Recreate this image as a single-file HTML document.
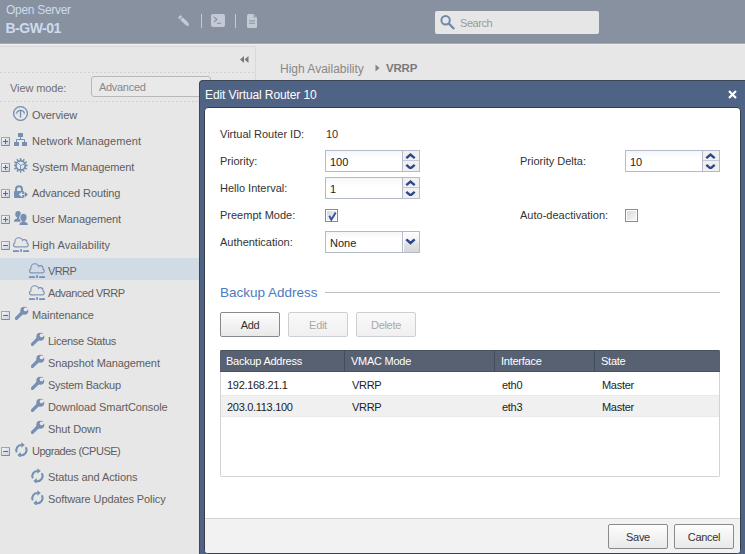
<!DOCTYPE html>
<html><head><meta charset="utf-8">
<style>
*{box-sizing:border-box;margin:0;padding:0}
html,body{width:745px;height:554px;overflow:hidden;background:#e7e7e7;font-family:"Liberation Sans",sans-serif;font-size:11px;color:#333}
.abs{position:absolute}
#hdr{position:absolute;left:0;top:0;width:745px;height:44px;background:#8891a0;border-bottom:1px solid #a9aaa6;box-shadow:0 1px 0 #eeeeee}
#hdr .t1{position:absolute;left:6px;top:3px;font-size:12px;letter-spacing:-0.3px;color:#cddbee;white-space:nowrap}
#hdr .t2{position:absolute;left:5.5px;top:20px;font-size:14px;letter-spacing:-0.5px;font-weight:bold;color:#cddbee;white-space:nowrap}
.sep{position:absolute;top:14px;width:1px;height:14px;background:#b9cde6}
#search{position:absolute;left:435px;top:11px;width:164px;height:23px;background:#e6e6e6;border-radius:2px}
#search span{position:absolute;left:25px;top:6px;color:#9a9a9a;font-size:11px;letter-spacing:-0.45px}
#side{position:absolute;left:0;top:46px;width:256px;height:520px;border-right:1px solid #d9d9d9;border-top:1px solid #d9d9d9;background:#e7e7e7}
.dots{position:absolute;left:0;width:255px;height:1px;background:repeating-linear-gradient(90deg,#d2d2d2 0 2px,transparent 2px 4px)}
.it{position:absolute;white-space:nowrap;color:#5e5e5e;font-size:11px;letter-spacing:-0.1px}
.pm{position:absolute;left:1px;width:9px;height:9px;border:1px solid #9ca6b5;border-right-color:#8a94a4;border-bottom-color:#7f8998;border-radius:1px;background:linear-gradient(135deg,#f3f5f8,#c9d2de)}
.pm:before{content:"";position:absolute;left:1px;top:3px;width:5px;height:1px;background:#5f6a7a}
.pm.p:after{content:"";position:absolute;left:3px;top:1px;width:1px;height:5px;background:#5f6a7a}
#bc{position:absolute;left:280px;top:62px;font-size:12px;color:#888;white-space:nowrap}
#modal{position:absolute;left:199px;top:80px;width:560px;height:480px;background:#4f6384;border-top:1px solid #3d4654;border-left:1px solid #3d4654;border-radius:4px 0 0 0}
#mtitle{position:absolute;left:5px;top:7px;color:#fff;font-size:12px;white-space:nowrap;letter-spacing:-0.1px}
#mx{position:absolute;left:528px;top:9px;width:9px;height:9px}
#mbody{position:absolute;left:4px;top:26px;width:537px;height:447px;background:#fff;border:1px solid #363e4b;border-radius:4px}
#minner{position:absolute;left:0;top:-1px;width:535px;height:446px}
#mfoot{position:absolute;left:0;top:411px;width:535px;height:35px;background:#f2f2f2;border-top:1px solid #d2d2d2;border-radius:0 0 3px 3px}
.lbl{position:absolute;white-space:nowrap;color:#333;font-size:11px}
.inp{position:absolute;width:95px;height:22px;border:1px solid #b5bacb;background:linear-gradient(#f4f6f8,#fff 40%);}
.inp span{position:absolute;left:4px;top:5px;font-size:11px;color:#222}
.spin{position:absolute;right:0;top:0;width:17px;height:20px;border-left:1px solid #b5bacb;background:#f0f0f0}
.spin.dd:before{display:none}
.spin:before{content:"";position:absolute;left:0;top:9px;width:16px;height:1px;background:#c4c8d4}
.cb{position:absolute;width:13px;height:13px;border:1px solid #8a8a8a;background:#fff}
.cb i{position:absolute;left:1px;top:1px;width:9px;height:9px;background:linear-gradient(135deg,#d6d9de,#f7f7f7)}
.btn{position:absolute;height:25px;width:60px;border:1px solid #8a8a8a;border-radius:2px;background:linear-gradient(#fdfdfd,#e9e9e9);text-align:center;line-height:25px;font-size:11px;color:#333;letter-spacing:-0.3px}
.btn.dis{border-color:#cfcfcf;color:#a8a8a8;background:linear-gradient(#fafafa,#f0f0f0)}
#tbl{position:absolute;left:15px;top:243px;width:500px;height:127px;border:1px solid #d3d3d3;border-top:none;border-radius:0 0 2px 2px}
.th{position:absolute;top:0;height:22px;background:#576172;box-shadow:inset 0 1px 0 #4a5361,inset 0 -1px 0 #4a5361;color:#fff;font-size:11px;line-height:22px;padding-left:6px;white-space:nowrap;letter-spacing:-0.25px}
.row{position:absolute;left:0;width:498px;height:22px}
.td{position:absolute;top:1px;line-height:22px;font-size:11px;color:#222;white-space:nowrap;letter-spacing:-0.3px}
</style></head><body>
<svg width="0" height="0" style="position:absolute">
<defs>
<symbol id="i-ov" viewBox="0 0 18 18">
 <circle cx="8.5" cy="10.5" r="6.9" stroke="#7590b3" stroke-width="1.4" fill="none"/>
 <path d="M4.5 10.6 A4.1 4.1 0 0 1 12.5 10.6" stroke="#7590b3" stroke-width="1.3" fill="none"/>
 <path d="M8.5 6.8 V14.6" stroke="#7590b3" stroke-width="1.3"/>
</symbol>
<symbol id="i-net" viewBox="0 0 18 18">
 <g fill="#7590b3"><rect x="4" y="4" width="5" height="4"/><rect x="0" y="13" width="5" height="4"/><rect x="8" y="13" width="5" height="4"/></g>
 <path d="M6.5 8 V10.5 M2.5 13 V10.5 H10.5 V13" stroke="#7590b3" stroke-width="1" fill="none"/>
</symbol>
<symbol id="i-gear" viewBox="0 0 18 18">
 <polygon id="gearpoly" fill="#7590b3" points="5.59,5.20 6.09,3.12 7.11,3.12 7.61,5.20 8.33,5.39 9.80,3.84 10.68,4.35 10.08,6.40 10.60,6.92 12.65,6.32 13.16,7.20 11.61,8.67 11.80,9.39 13.88,9.89 13.88,10.91 11.80,11.41 11.61,12.13 13.16,13.60 12.65,14.48 10.60,13.88 10.08,14.40 10.68,16.45 9.80,16.96 8.33,15.41 7.61,15.60 7.11,17.68 6.09,17.68 5.59,15.60 4.87,15.41 3.40,16.96 2.52,16.45 3.12,14.40 2.60,13.88 0.55,14.48 0.04,13.60 1.59,12.13 1.40,11.41 -0.68,10.91 -0.68,9.89 1.40,9.39 1.59,8.67 0.04,7.20 0.55,6.32 2.60,6.92 3.12,6.40 2.52,4.35 3.40,3.84 4.87,5.39"/>
 <circle cx="6.6" cy="10.4" r="3.7" fill="#e7e7e7"/>
 <path d="M6.6 10.4 L3.8 7.8 M6.6 10.4 L10 9.2 M6.6 10.4 V14" stroke="#7590b3" stroke-width="1"/>
</symbol>
<symbol id="i-route" viewBox="0 0 18 18">
 <path d="M2 10.5 V8.3 A3 3 0 0 1 8 8.3 V10.5" stroke="#7590b3" stroke-width="2" fill="none"/>
 <rect x="0" y="10.1" width="10" height="6.8" rx="0.8" fill="#7590b3"/>
 <path d="M4.7 13.5 L8.1 10.8 L8.1 16.2 Z" fill="#e7e7e7"/>
 <rect x="8" y="13" width="2.6" height="1" fill="#e7e7e7"/>
 <path d="M10.6 13.5 H11.5" stroke="#7590b3" stroke-width="1"/>
 <path d="M10.6 10.6 L14 13.5 L10.6 16.4 Z" fill="#7590b3"/>
</symbol>
<symbol id="i-user" viewBox="0 0 18 18">
 <ellipse cx="5.1" cy="7.3" rx="2.8" ry="3.3" fill="#7590b3"/>
 <rect x="4" y="9.5" width="2.2" height="2.5" fill="#7590b3"/>
 <path d="M0.9 14.7 Q1.1 11.4 5.1 11.4 Q8.9 11.4 9.2 14.7 Z" fill="#7590b3"/>
 <ellipse cx="10.5" cy="10.5" rx="4" ry="4.6" fill="#e7e7e7"/>
 <path d="M5.5 18.6 Q5.7 13.8 10.5 13.8 Q15.3 13.8 15.8 18.6 Z" fill="#e7e7e7"/>
 <ellipse cx="10.5" cy="10.5" rx="3.1" ry="3.7" fill="#7590b3"/>
 <rect x="9.3" y="12.8" width="2.4" height="2.5" fill="#7590b3"/>
 <path d="M6.4 17.9 Q6.6 14.7 10.5 14.7 Q14.6 14.7 14.9 17.9 Z" fill="#7590b3"/>
</symbol>
<symbol id="i-cloud" viewBox="0 0 20 20">
 <mask id="cm" maskUnits="userSpaceOnUse" x="0" y="0" width="20" height="20">
  <g fill="#fff"><circle cx="6.8" cy="8.6" r="4.4"/><circle cx="12.2" cy="9.4" r="3.3"/><circle cx="14.4" cy="12" r="2.4"/><circle cx="3.6" cy="11.8" r="2.6"/><rect x="3.6" y="9" width="10.8" height="5.4"/></g>
  <g fill="#000"><circle cx="6.8" cy="8.6" r="3.3"/><circle cx="12.2" cy="9.4" r="2.2"/><circle cx="14.4" cy="12" r="1.3"/><circle cx="3.6" cy="11.8" r="1.5"/><rect x="3.6" y="9" width="10.8" height="4.3"/></g>
 </mask>
 <rect x="0" y="0" width="20" height="20" fill="#7590b3" mask="url(#cm)"/>
 <g fill="#7590b3"><rect x="1" y="17.2" width="5.9" height="1.8"/><rect x="8.2" y="16.1" width="1.7" height="2.9"/><rect x="11.2" y="17.2" width="5.8" height="1.8"/></g>
</symbol>
<symbol id="i-wrench" viewBox="0 0 18 18">
 <mask id="wm"><rect x="0" y="0" width="18" height="18" fill="#fff"/><circle cx="11.6" cy="6.4" r="1.9" fill="#000"/><path d="M11.6 6.4 L15 3 L16 7 Z" fill="#000"/></mask>
 <g mask="url(#wm)" fill="#7590b3">
 <path d="M2.4 15.4 L8.8 9" stroke="#7590b3" stroke-width="3.3" stroke-linecap="round"/>
 <circle cx="10.3" cy="7.7" r="4"/>
 </g>
</symbol>
<symbol id="i-refresh" viewBox="0 0 18 18">
 <path d="M2.8 13.4 A5 5 0 0 1 7.6 6.1" stroke="#7590b3" stroke-width="2" fill="none"/>
 <path d="M7.3 3.2 L10.8 6 L7.3 8.8 Z" fill="#7590b3"/>
 <path d="M11.7 8.3 A5 5 0 0 1 6.5 16" stroke="#7590b3" stroke-width="2" fill="none"/>
 <path d="M6.8 13.1 L3.4 16 L6.8 18.9 Z" fill="#7590b3"/>
</symbol>
</defs></svg>

<div id="hdr">
  <div class="t1">Open Server</div>
  <div class="t2">B-GW-01</div>
  <svg class="abs" style="left:177px;top:14px" width="13" height="13" viewBox="0 0 13 13"><path d="M3.57 1.03 L5.13 2.59 L2.59 5.13 L1.03 3.57 Z M5.69 3.15 L11.35 8.81 L12.2 12.2 L8.81 11.35 L3.15 5.69 Z" fill="#c3cad6"/></svg>
  <div class="sep" style="left:201px"></div>
  <svg class="abs" style="left:211px;top:14px" width="14" height="13" viewBox="0 0 14 13"><rect x="0" y="0" width="14" height="13" rx="2" fill="#c3cad6"/><path d="M2.8 3 L6 5.5 L2.8 8" stroke="#8891a0" stroke-width="1.1" fill="none"/><rect x="6" y="8.8" width="4.2" height="1" fill="#8891a0"/></svg>
  <div class="sep" style="left:235px"></div>
  <svg class="abs" style="left:247px;top:14px" width="10" height="14" viewBox="0 0 10 14"><path d="M1.5 0 H6.5 L10 3.5 V12.5 Q10 14 8.5 14 H1.5 Q0 14 0 12.5 V1.5 Q0 0 1.5 0 Z" fill="#c3cad6"/><path d="M6.5 0.3 V3.5 H9.7 Z" fill="#97a0ae"/><rect x="2" y="6.4" width="6" height="1" fill="#8891a0"/><rect x="2" y="8.7" width="6" height="1" fill="#8891a0"/></svg>
  <div id="search">
    <svg class="abs" style="left:5px;top:3px" width="17" height="17" viewBox="0 0 17 17"><circle cx="5.6" cy="6.2" r="4.2" stroke="#6f8aab" stroke-width="2" fill="none"/><path d="M8.6 9.4 L14.2 15" stroke="#6f8aab" stroke-width="2.3"/></svg>
    <span>Search</span>
  </div>
</div>
<div id="side">
  <svg class="abs" style="left:240px;top:9px" width="9" height="7" viewBox="0 0 9 7"><path d="M0 3.5 L4 0 V7 Z M4.5 3.5 L8.5 0 V7 Z" fill="#7a7a7a"/></svg>
  <div class="dots" style="top:25px"></div>
  <div class="it" style="left:10px;top:35px;color:#707070">View mode:</div>
  <div class="abs" style="left:91px;top:29px;width:120px;height:21px;border:1px solid #b8b8b8;border-radius:3px;background:#e9e9e9"><span class="abs" style="left:7px;top:4px;color:#888;font-size:11px;letter-spacing:-0.3px">Advanced</span></div>
  <div class="dots" style="top:54px"></div>
</div>
<div id="bc">High Availability</div><svg class="abs" style="left:375px;top:64px" width="5" height="8" viewBox="0 0 5 8"><path d="M0.5 0.5 L4.5 4 L0.5 7.5 Z" fill="#7c8596"/></svg><div class="abs" style="left:386px;top:62px;font-size:11.5px;font-weight:bold;color:#7a7a7a;white-space:nowrap;letter-spacing:-0.2px">VRRP</div>
<div id="menu">
<div class="abs" style="left:0;top:258px;width:200px;height:22px;background:#d0dbe6"></div>
<div class="it" style="left:32px;top:109px">Overview</div>
<svg class="abs" style="left:12px;top:103px" width="18" height="18"><use href="#i-ov"/></svg>
<div class="it" style="left:32px;top:135px;letter-spacing:0.08px">Network Management</div>
<svg class="abs" style="left:14px;top:129px" width="18" height="18"><use href="#i-net"/></svg>
<div class="pm p" style="top:137px"></div>
<div class="it" style="left:32px;top:161px">System Management</div>
<svg class="abs" style="left:14px;top:155px" width="18" height="18"><use href="#i-gear"/></svg>
<div class="pm p" style="top:163px"></div>
<div class="it" style="left:32px;top:187px">Advanced Routing</div>
<svg class="abs" style="left:14px;top:181px" width="18" height="18"><use href="#i-route"/></svg>
<div class="pm p" style="top:189px"></div>
<div class="it" style="left:32px;top:213px">User Management</div>
<svg class="abs" style="left:13px;top:207px" width="18" height="18"><use href="#i-user"/></svg>
<div class="pm p" style="top:215px"></div>
<div class="it" style="left:32px;top:239px;letter-spacing:0.08px">High Availability</div>
<svg class="abs" style="left:12px;top:233px" width="20" height="20"><use href="#i-cloud"/></svg>
<div class="pm m" style="top:241px"></div>
<div class="it" style="left:48px;top:265px;letter-spacing:-0.6px">VRRP</div>
<svg class="abs" style="left:28px;top:259px" width="20" height="20"><use href="#i-cloud"/></svg>
<div class="it" style="left:48px;top:287px;letter-spacing:-0.45px">Advanced VRRP</div>
<svg class="abs" style="left:28px;top:281px" width="20" height="20"><use href="#i-cloud"/></svg>
<div class="it" style="left:32px;top:309px">Maintenance</div>
<svg class="abs" style="left:14px;top:303px" width="18" height="18"><use href="#i-wrench"/></svg>
<div class="pm m" style="top:311px"></div>
<div class="it" style="left:48px;top:335px;letter-spacing:-0.3px">License Status</div>
<svg class="abs" style="left:30px;top:329px" width="18" height="18"><use href="#i-wrench"/></svg>
<div class="it" style="left:48px;top:357px">Snapshot Management</div>
<svg class="abs" style="left:30px;top:351px" width="18" height="18"><use href="#i-wrench"/></svg>
<div class="it" style="left:48px;top:379px;letter-spacing:-0.28px">System Backup</div>
<svg class="abs" style="left:30px;top:373px" width="18" height="18"><use href="#i-wrench"/></svg>
<div class="it" style="left:48px;top:401px">Download SmartConsole</div>
<svg class="abs" style="left:30px;top:395px" width="18" height="18"><use href="#i-wrench"/></svg>
<div class="it" style="left:48px;top:423px">Shut Down</div>
<svg class="abs" style="left:30px;top:417px" width="18" height="18"><use href="#i-wrench"/></svg>
<div class="it" style="left:32px;top:445px;letter-spacing:-0.48px">Upgrades (CPUSE)</div>
<svg class="abs" style="left:14px;top:439px" width="18" height="18"><use href="#i-refresh"/></svg>
<div class="pm m" style="top:447px"></div>
<div class="it" style="left:48px;top:471px">Status and Actions</div>
<svg class="abs" style="left:30px;top:465px" width="18" height="18"><use href="#i-refresh"/></svg>
<div class="it" style="left:48px;top:493px">Software Updates Policy</div>
<svg class="abs" style="left:30px;top:487px" width="18" height="18"><use href="#i-refresh"/></svg>
</div>
<div id="modal">
  <div id="mtitle">Edit Virtual Router 10</div>
  <svg id="mx" viewBox="0 0 9 9"><path d="M1 1 L8 8 M8 1 L1 8" stroke="#fff" stroke-width="2.2"/></svg>
  <div id="mbody"><div id="minner">
    <div class="lbl" style="left:15px;top:21px">Virtual Router ID:</div>
    <div class="lbl" style="left:121px;top:21px">10</div>
    <div class="lbl" style="left:15px;top:48px">Priority:</div>
    <div class="inp" style="left:120px;top:43px"><span>100</span><div class="spin"><svg class="abs" style="left:2px;top:2px" width="11" height="16" viewBox="0 0 11 16"><path d="M1.3 5.2 L5.5 1.6 L9.7 5.2 M1.3 11.8 L5.5 15.4 L9.7 11.8" stroke="#29478a" stroke-width="2.4" fill="none"/></svg></div></div>
    <div class="lbl" style="left:15px;top:75px">Hello Interval:</div>
    <div class="inp" style="left:120px;top:70px"><span>1</span><div class="spin"><svg class="abs" style="left:2px;top:2px" width="11" height="16" viewBox="0 0 11 16"><path d="M1.3 5.2 L5.5 1.6 L9.7 5.2 M1.3 11.8 L5.5 15.4 L9.7 11.8" stroke="#29478a" stroke-width="2.4" fill="none"/></svg></div></div>
    <div class="lbl" style="left:15px;top:102px">Preempt Mode:</div>
    <div class="cb" style="left:120px;top:102px"><i></i><svg class="abs" style="left:1px;top:1px" width="11" height="11" viewBox="0 0 11 11"><path d="M2.3 4.8 L4.3 8.7 L8.7 1.4" stroke="#3a559f" stroke-width="1.9" fill="none"/></svg></div>
    <div class="lbl" style="left:15px;top:129px">Authentication:</div>
    <div class="inp" style="left:120px;top:124px"><span>None</span><div class="spin dd" style="background:linear-gradient(#fdfdfd,#f4f4f4 40%,#e2e2e2 60%,#d6d6d6);box-shadow:inset 1px 1px 0 #fff"><svg class="abs" style="left:2px;top:5px" width="11" height="10" viewBox="0 0 11 10"><path d="M1.3 2.4 L5.5 6 L9.7 2.4" stroke="#29478a" stroke-width="2.5" fill="none"/></svg></div></div>
    <div class="lbl" style="left:315px;top:48px">Priority Delta:</div>
    <div class="inp" style="left:420px;top:43px"><span>10</span><div class="spin"><svg class="abs" style="left:2px;top:2px" width="11" height="16" viewBox="0 0 11 16"><path d="M1.3 5.2 L5.5 1.6 L9.7 5.2 M1.3 11.8 L5.5 15.4 L9.7 11.8" stroke="#29478a" stroke-width="2.4" fill="none"/></svg></div></div>
    <div class="lbl" style="left:315px;top:102px">Auto-deactivation:</div>
    <div class="cb" style="left:420px;top:102px"><i></i></div>
    <div class="lbl" id="bah" style="left:15px;top:178px;font-size:13.5px;color:#4b7bc0">Backup Address</div>
    <div class="abs" style="left:120px;top:185px;width:395px;height:1px;background:#bdbdbd"></div>
    <div class="btn" style="left:15px;top:205px">Add</div>
    <div class="btn dis" style="left:83px;top:205px">Edit</div>
    <div class="btn dis" style="left:151px;top:205px">Delete</div>
    <div id="tbl">
      <div class="th" style="left:-1px;width:124px;border-radius:2px 0 0 0">Backup Address</div>
      <div class="th" style="left:123px;width:150px;border-left:1px solid #434c59">VMAC Mode</div>
      <div class="th" style="left:273px;width:100px;border-left:1px solid #434c59">Interface</div>
      <div class="th" style="left:373px;width:126px;border-left:1px solid #434c59;border-radius:0 2px 0 0">State</div>
      <div class="row" style="top:22px;height:23px"><div class="td" style="left:6px;top:2px">192.168.21.1</div><div class="td" style="left:131px;top:2px">VRRP</div><div class="td" style="left:281px;top:2px">eth0</div><div class="td" style="left:381px;top:2px">Master</div></div>
      <div class="row" style="top:45px;height:22px;background:#f0f0f0;box-shadow:inset 0 1px 0 #e9e9e9,inset 0 -1px 0 #e9e9e9"><div class="td" style="left:6px">203.0.113.100</div><div class="td" style="left:131px">VRRP</div><div class="td" style="left:281px">eth3</div><div class="td" style="left:381px">Master</div></div>
    </div>
    <div id="mfoot">
      <div class="btn" style="left:403px;top:5px">Save</div>
      <div class="btn" style="left:469px;top:5px">Cancel</div>
    </div>
  </div></div>
</div>
</body></html>
